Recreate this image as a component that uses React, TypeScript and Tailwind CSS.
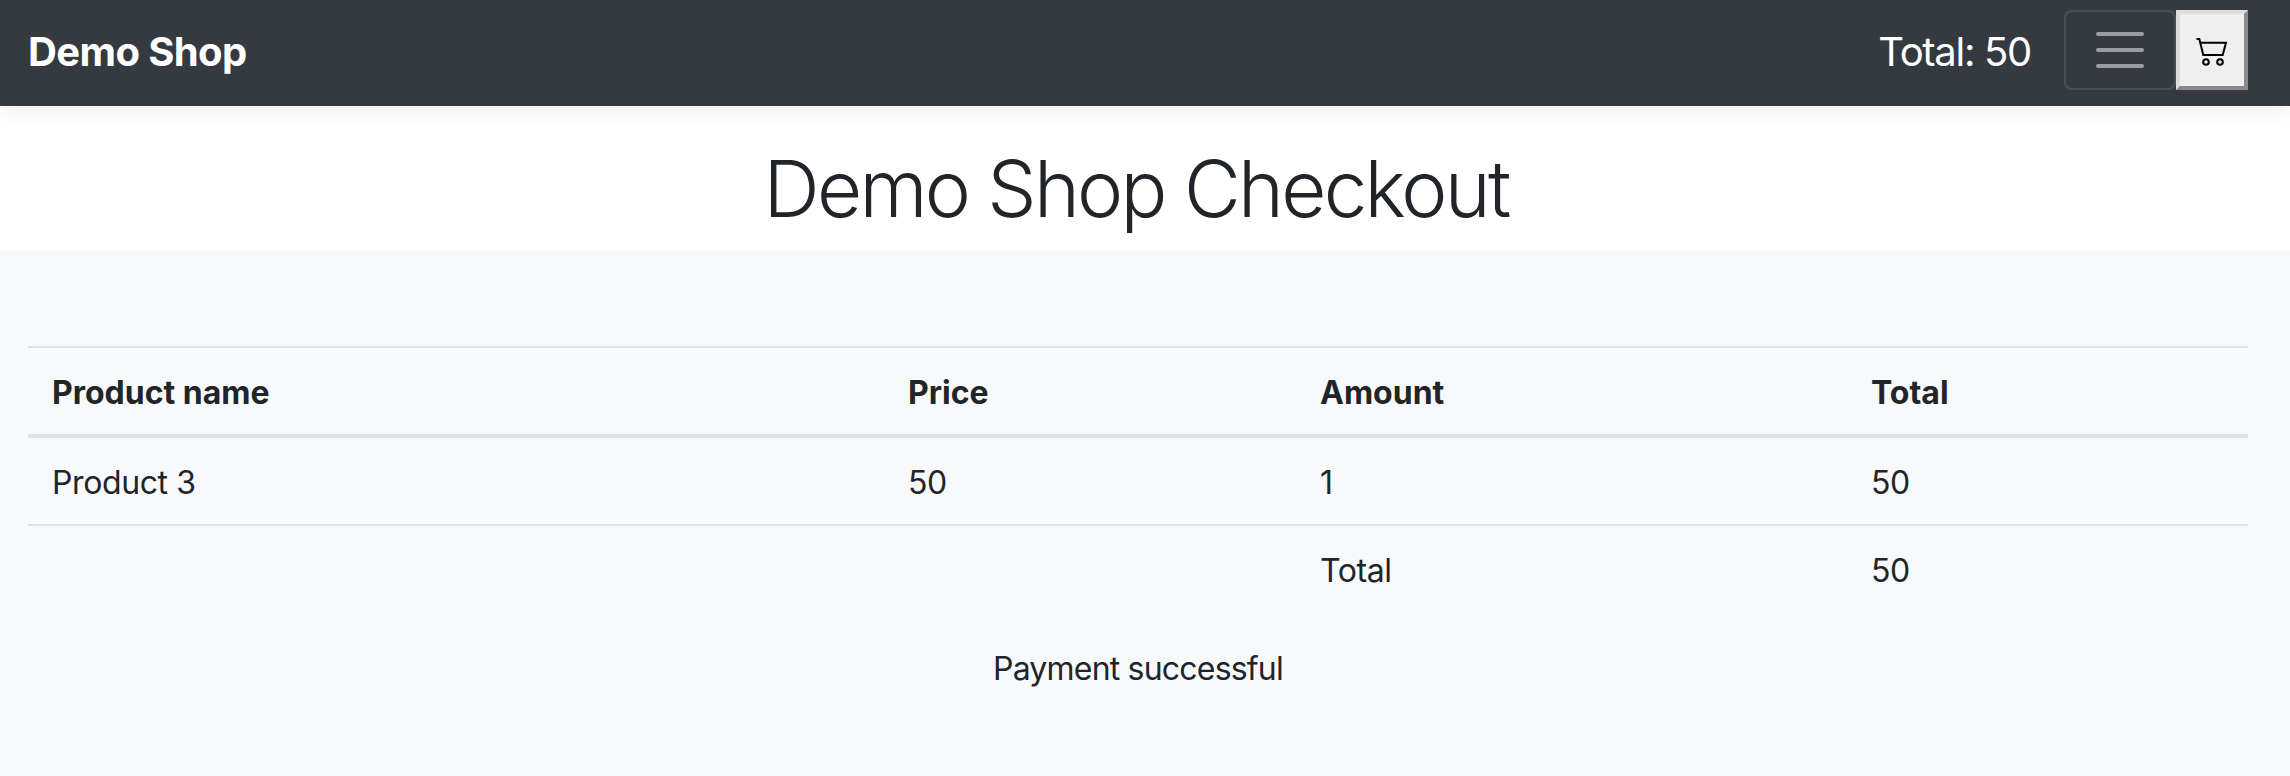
import React from 'react';

const font = { fontFamily: 'Inter, sans-serif' };

const CartIcon = () => (
  <svg width="32" height="32" viewBox="0 0 32 32" fill="none" stroke="#000" strokeWidth="2">
    <path d="M0.5 5H3.3L7.3 21H26.7L30 8.7H4.2" />
    <circle cx="10" cy="28" r="2.8" />
    <circle cx="24" cy="28" r="2.8" />
  </svg>
);

const Navbar = () => (
  <nav className="relative z-10 flex h-[106px] items-center justify-between bg-[#343a40] pb-[6px] pl-[28px] pr-[42px] shadow-[0_8px_16px_rgba(0,0,0,0.05)]">
    <span className="pt-[3px] text-[40px] font-bold tracking-[-0.6px] text-white">Demo Shop</span>
    <div className="flex items-center">
      <span className="mr-[33px] pt-[3px] text-[40px] tracking-[-1.3px] text-white">Total: 50</span>
      <button className="flex h-[80px] w-[112px] items-center justify-center rounded-[8px] border-2 border-[#4a4f55]">
        <span className="flex h-[36px] w-[48px] flex-col justify-between">
          <span className="h-[4px] rounded-full bg-[#9a9da0]" />
          <span className="h-[4px] rounded-full bg-[#9a9da0]" />
          <span className="h-[4px] rounded-full bg-[#9a9da0]" />
        </span>
      </button>
      <button className="flex h-[80px] w-[72px] items-center justify-center border-4 border-t-[#dcdcdc] border-l-[#dcdcdc] border-r-[#8a8a8a] border-b-[#8a8a8a] bg-[#efefef]">
        <CartIcon />
      </button>
    </div>
  </nav>
);

const cell = 'px-[24px] pt-[26px] pb-[22px] leading-[38px]';

export default function App() {
  return (
    <div className="min-h-[776px] bg-[#f8f9fa] text-[#212529]" style={font}>
      <Navbar />
      <div className="flex h-[144px] items-center justify-center bg-white pr-[18px] pt-[22px]">
        <h1 className="text-[78px] font-light leading-[1.2] tracking-[-2.75px]">Demo Shop Checkout</h1>
      </div>
      <div className="pl-[28px] pr-[42px] pt-[96px]">
        <table className="w-full table-fixed border-collapse text-[32px]">
          <colgroup>
            <col className="w-[856px]" />
            <col className="w-[412px]" />
            <col className="w-[551px]" />
            <col />
          </colgroup>
          <thead>
            <tr className="border-t-2 border-b-4 border-[#dee2e6]">
              <th className={`${cell} text-left font-bold`}>Product name</th>
              <th className={`${cell} text-left font-bold`}>Price</th>
              <th className={`${cell} text-left font-bold`}>Amount</th>
              <th className={`${cell} text-left font-bold`}>Total</th>
            </tr>
          </thead>
          <tbody className="tracking-[-0.4px]">
            <tr className="border-b-2 border-[#dee2e6]">
              <td className={cell}>Product 3</td>
              <td className={cell}>50</td>
              <td className={cell}>1</td>
              <td className={cell}>50</td>
            </tr>
            <tr>
              <td className={cell} />
              <td className={cell} />
              <td className={cell}>Total</td>
              <td className={cell}>50</td>
            </tr>
          </tbody>
        </table>
        <p className="mt-[38px] text-center text-[32px] leading-[38px] tracking-[-0.8px]">Payment successful</p>
      </div>
    </div>
  );
}
